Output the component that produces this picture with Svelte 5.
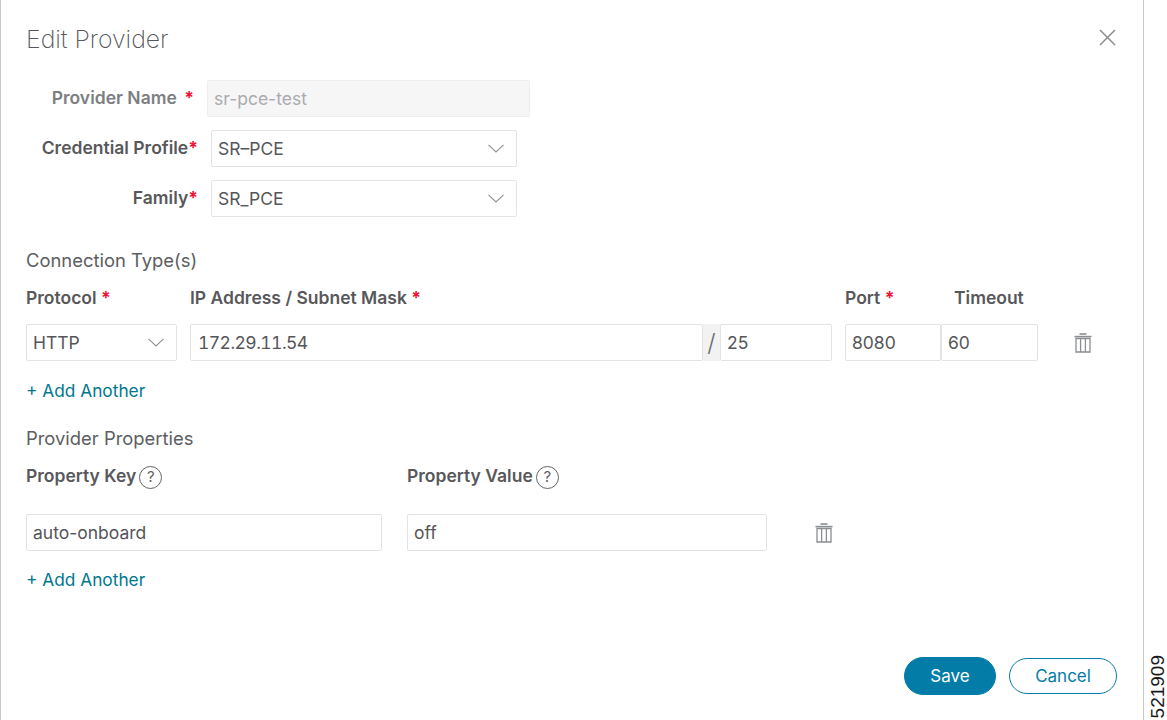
<script>
  const connection = { protocol: "HTTP", ip: "172.29.11.54", mask: "25", port: "8080", timeout: "60" };
  const property = { key: "auto-onboard", value: "off" };
</script>

{#snippet chevron()}
  <svg class="chevron" width="16" height="9" viewBox="0 0 16 9" fill="none" stroke="#8d9196" stroke-width="1.1">
    <path d="M0.5 0.8 L8 8 L15.5 0.8" />
  </svg>
{/snippet}

{#snippet trash()}
  <svg width="18" height="20" viewBox="0 0 18 20" fill="none" stroke="#8b8f93" stroke-width="1.3">
    <path d="M0.5 3.6 H17.5" stroke-width="1.6" />
    <path d="M5.5 1 H12.5" stroke-width="1.6" />
    <path d="M2 5.5 V19 H16 V5.5 Z" />
    <path d="M6.6 5.5 V19 M11.4 5.5 V19" />
  </svg>
{/snippet}

{#snippet help()}
  <i class="help">?</i>
{/snippet}

<div class="dialog">
  <header>
    <h1>Edit Provider</h1>
    <svg class="close" width="17" height="17" viewBox="0 0 17 17" stroke="#8a8d90" stroke-width="1.5">
      <path d="M1 1 L16 16 M16 1 L1 16" />
    </svg>
  </header>

  <div class="top-row first">
    <span class="top-label muted">Provider Name <b class="star gap">*</b></span>
    <div class="field disabled">sr-pce-test</div>
  </div>
  <div class="top-row">
    <span class="top-label wide">Credential Profile<b class="star">*</b></span>
    <div class="field select">SR–PCE {@render chevron()}</div>
  </div>
  <div class="top-row">
    <span class="top-label wide">Family<b class="star">*</b></span>
    <div class="field select">SR_PCE {@render chevron()}</div>
  </div>

  <h2 class="conn-title">Connection Type(s)</h2>
  <div class="conn-labels">
    <span class="c-protocol">Protocol <b class="star">*</b></span>
    <span class="c-ip">IP Address / Subnet Mask <b class="star">*</b></span>
    <span class="c-port">Port <b class="star">*</b></span>
    <span class="c-timeout">Timeout</span>
  </div>
  <div class="conn-row">
    <div class="field select c-protocol">{connection.protocol} {@render chevron()}</div>
    <div class="ip-group">
      <div class="field ip">{connection.ip}</div>
      <div class="slash">/</div>
      <div class="field mask">{connection.mask}</div>
    </div>
    <div class="field c-port">{connection.port}</div>
    <div class="field c-timeout-field">{connection.timeout}</div>
    <span class="conn-trash">{@render trash()}</span>
  </div>
  <div class="add first-add">+ Add Another</div>

  <h2 class="prop-title">Provider Properties</h2>
  <div class="prop-labels">
    <span class="p-key">Property Key {@render help()}</span>
    <span class="p-value">Property Value {@render help()}</span>
  </div>
  <div class="prop-row">
    <div class="field p-key">{property.key}</div>
    <div class="field p-value">{property.value}</div>
    <span class="prop-trash">{@render trash()}</span>
  </div>
  <div class="add">+ Add Another</div>

  <footer>
    <button class="save">Save</button>
    <button class="cancel">Cancel</button>
  </footer>
</div>

<div class="figure-id">521909</div>

<style>
  :global(body) {
    margin: 0;
    background: #fff;
    font-family: Inter, "Liberation Sans", sans-serif;
  }
  .dialog {
    box-sizing: border-box;
    width: 1144px;
    height: 720px;
    padding-left: 25px;
    border-left: 1px solid #c9c9c9;
    border-right: 1px solid #c9c9c9;
    color: #58585b;
    font-size: 17.5px;
    line-height: 20px;
    overflow: hidden;
  }
  header {
    display: flex;
    justify-content: space-between;
    align-items: center;
    height: 77px;
    padding-right: 27px;
  }
  h1 {
    margin: 0;
    font-size: 24.8px;
    font-weight: 200;
    color: #55575b;
  }
  .close {
    margin-top: -2px;
  }
  .top-row {
    display: flex;
    align-items: center;
    height: 37px;
    margin-top: 13px;
  }
  .top-row.first {
    margin-top: 3px;
  }
  .top-label {
    box-sizing: border-box;
    margin-left: -25px;
    width: 193px;
    text-align: right;
    font-weight: 600;
    margin-right: 13px;
    white-space: nowrap;
    margin-top: -2px;
  }
  .top-label.wide {
    width: 197px;
  }
  .muted {
    color: #7c7e82;
  }
  .star {
    color: #ee1133;
    font-weight: 700;
  }
  .gap {
    margin-left: 3px;
  }
  .field {
    box-sizing: border-box;
    display: flex;
    align-items: center;
    justify-content: space-between;
    height: 37px;
    padding: 0 6px;
    border: 1px solid #e2e3e4;
    border-radius: 2px;
    background: #fff;
    color: #55565a;
  }
  .disabled {
    width: 323px;
    background: #f6f6f6;
    border-color: #eeeeee;
    color: #a9abae;
  }
  .top-row .select {
    width: 306px;
  }
  .select {
    padding-right: 12px;
  }
  h2 {
    margin: 0;
    font-size: 18.4px;
    font-weight: 400;
    line-height: 20px;
    color: #5c5e62;
  }
  .conn-title {
    margin-top: 33px;
  }
  .conn-labels,
  .prop-labels {
    display: flex;
    font-weight: 600;
    margin-top: 18px;
    height: 20px;
    white-space: nowrap;
  }
  .conn-row,
  .prop-row {
    display: flex;
    align-items: center;
  }
  .conn-row {
    margin-top: 16px;
  }
  .c-protocol {
    width: 151px;
    margin-right: 13px;
  }
  .c-ip {
    width: 642px;
    margin-right: 13px;
  }
  .c-port {
    width: 96px;
  }
  .c-timeout {
    padding-left: 13px;
  }
  .ip-group {
    display: flex;
    width: 642px;
    margin-right: 13px;
  }
  .ip {
    width: 513px;
    padding-left: 7px;
    font-variant-numeric: tabular-nums;
    letter-spacing: -0.55px;
  }
  .slash {
    box-sizing: border-box;
    width: 17px;
    height: 37px;
    background: #f2f2f2;
    color: #6a6c70;
    font-size: 24px;
    line-height: 38px;
    text-align: center;
    font-weight: 300;
  }
  .mask {
    width: 112px;
  }
  .c-timeout-field {
    width: 97px;
  }
  .conn-trash {
    display: flex;
    margin-left: 36px;
    margin-top: 1px;
  }
  .add {
    margin-top: 19px;
    color: #00778f;
    font-size: 17.3px;
  }
  .first-add {
    margin-top: 20px;
  }
  .prop-title {
    margin-top: 27px;
  }
  .prop-labels {
    align-items: center;
  }
  .prop-labels span {
    display: flex;
    align-items: center;
    gap: 3px;
  }
  .prop-labels .p-key {
    width: 381px;
    margin-right: 0;
  }
  .help {
    box-sizing: border-box;
    display: block;
    width: 23px;
    height: 23px;
    margin-top: 3px;
    border: 1.3px solid #626468;
    border-radius: 50%;
    text-align: center;
    line-height: 20px;
    font-size: 15px;
    font-style: normal;
    font-weight: 400;
    color: #626468;
  }
  .prop-row {
    margin-top: 28px;
  }
  .field.p-key {
    width: 356px;
    margin-right: 25px;
  }
  .field.p-value {
    width: 360px;
  }
  .prop-trash {
    display: flex;
    margin-left: 48px;
    margin-top: 1px;
  }
  footer {
    display: flex;
    justify-content: flex-end;
    align-items: center;
    gap: 13px;
    margin-top: 67px;
    padding-right: 26px;
  }
  button {
    box-sizing: border-box;
    font: inherit;
    font-size: 17px;
    border-radius: 19px;
    padding: 0;
  }
  .save {
    width: 92px;
    height: 38px;
    background: #047ca8;
    border: 1px solid #047ca8;
    color: #fff;
  }
  .cancel {
    width: 108px;
    height: 36px;
    background: #fff;
    border: 1px solid #047ca8;
    color: #047ca8;
  }
  .figure-id {
    position: absolute;
    right: 0;
    bottom: 2px;
    writing-mode: vertical-rl;
    transform: rotate(180deg);
    font-family: "Liberation Sans", Arial, sans-serif;
    font-size: 19px;
    line-height: 18px;
    color: #1a1a1a;
  }
</style>
